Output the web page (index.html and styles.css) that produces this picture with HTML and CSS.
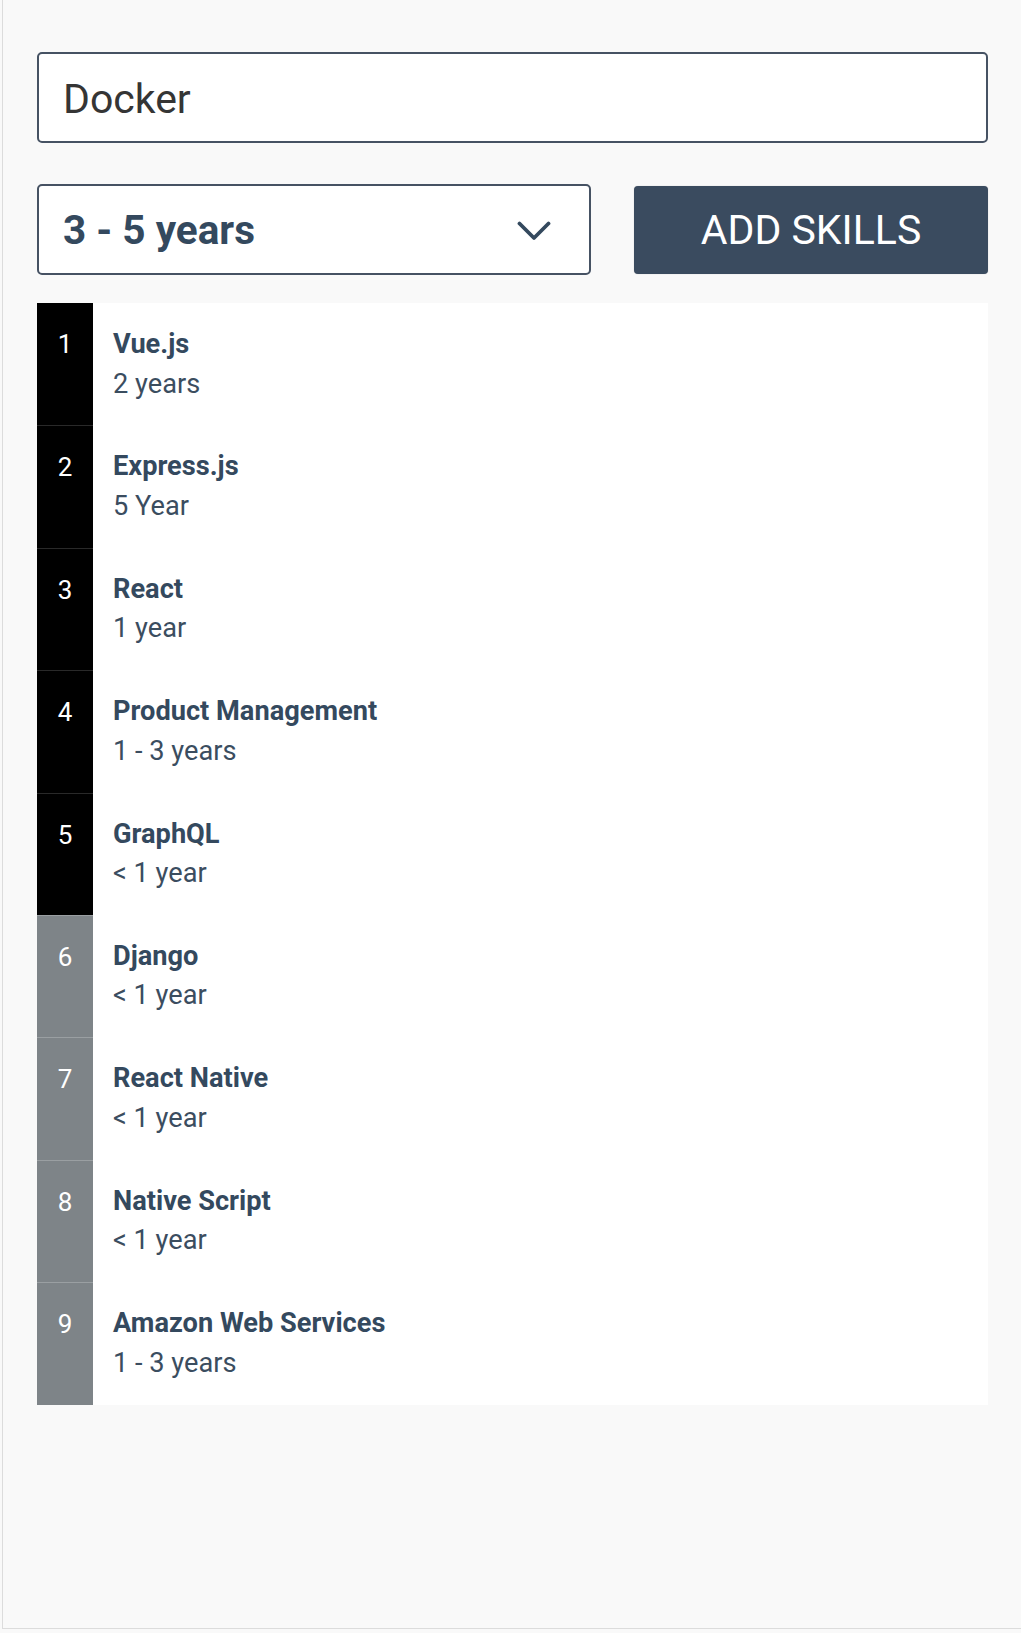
FILE: index.html
```html
<!DOCTYPE html>
<html lang="en">
<head>
<meta charset="utf-8">
<title>Skills</title>
<link rel="stylesheet" href="styles.css">
</head>
<body>
<div class="page">
  <div class="input">Docker</div>
  <div class="controls">
    <div class="select">
      <span class="select-value">3 - 5 years</span>
      <svg class="chevron" width="34" height="22" viewBox="0 0 34 22"><path d="M2.5 3.5 L17 18 L31.5 3.5" fill="none" stroke="#34495e" stroke-width="3.8" stroke-linecap="round" stroke-linejoin="round"/></svg>
    </div>
    <button class="add-btn">ADD SKILLS</button>
  </div>
  <ul class="skills">
    <li class="skill top"><span class="num">1</span><div class="info"><div class="name">Vue.js</div><div class="exp">2 years</div></div></li>
    <li class="skill top"><span class="num">2</span><div class="info"><div class="name">Express.js</div><div class="exp">5 Year</div></div></li>
    <li class="skill top"><span class="num">3</span><div class="info"><div class="name">React</div><div class="exp">1 year</div></div></li>
    <li class="skill top"><span class="num">4</span><div class="info"><div class="name">Product Management</div><div class="exp">1 - 3 years</div></div></li>
    <li class="skill top"><span class="num">5</span><div class="info"><div class="name">GraphQL</div><div class="exp">&lt; 1 year</div></div></li>
    <li class="skill rest"><span class="num">6</span><div class="info"><div class="name">Django</div><div class="exp">&lt; 1 year</div></div></li>
    <li class="skill rest"><span class="num">7</span><div class="info"><div class="name">React Native</div><div class="exp">&lt; 1 year</div></div></li>
    <li class="skill rest"><span class="num">8</span><div class="info"><div class="name">Native Script</div><div class="exp">&lt; 1 year</div></div></li>
    <li class="skill rest"><span class="num">9</span><div class="info"><div class="name">Amazon Web Services</div><div class="exp">1 - 3 years</div></div></li>
  </ul>
</div>
</body>
</html>
```
FILE: styles.css
```css
* { box-sizing: border-box; }
html, body { margin: 0; padding: 0; }
body {
  background: #f9f9f9;
  font-family: Roboto, "Liberation Sans", Arial, sans-serif;
  color: #34495e;
}
.page {
  margin-left: 2px;
  min-height: 1629px;
  border-left: 1px solid #dcdcdc;
  border-bottom: 1px solid #dcdcdc;
  padding: 52px 33px 0 34px;
}
.input {
  height: 91px;
  background: #fff;
  border: 2px solid #465263;
  border-radius: 5px;
  padding-left: 24px;
  font-size: 41px;
  line-height: 90px;
  color: #353535;
}
.controls {
  display: flex;
  align-items: center;
  margin-top: 41px;
}
.select {
  width: 554px;
  height: 91px;
  background: #fff;
  border: 2px solid #465263;
  border-radius: 5px;
  padding: 0 24px 0 24px;
  display: flex;
  align-items: center;
  justify-content: space-between;
}
.select-value {
  font-size: 40.5px;
  font-weight: 700;
  color: #34495e;
}
.chevron { margin-right: 14px; margin-top: 2px; }
.add-btn {
  flex: 1;
  margin-left: 43px;
  height: 88px;
  background: #3a4b5f;
  border: none;
  border-radius: 4px;
  box-shadow: 0 0 1px rgba(0,0,0,0.3);
  color: #fff;
  font-family: Roboto, "Liberation Sans", Arial, sans-serif;
  font-size: 41px;
  font-weight: 400;
  padding: 0;
}
.skills {
  list-style: none;
  margin: 28px 0 0;
  padding: 0;
  background: #fff;
}
.skill {
  display: flex;
  height: 122.4px;
}
.num {
  width: 56px;
  flex: none;
  text-align: center;
  color: #fff;
  font-size: 26px;
  line-height: 39px;
  padding-top: 22px;
  border-top: 1px solid rgba(255,255,255,0.16);
}
.skill:first-child .num { border-top: none; }
.top .num { background: #000; }
.rest .num { background: #7e8488; border-top-color: rgba(255,255,255,0.22); }
.info {
  padding: 22px 0 0 20px;
  font-size: 27.2px;
  line-height: 39.5px;
}
.name { font-weight: 700; color: #34495e; }
.exp { font-weight: 400; color: #3b4d5f; }
```
